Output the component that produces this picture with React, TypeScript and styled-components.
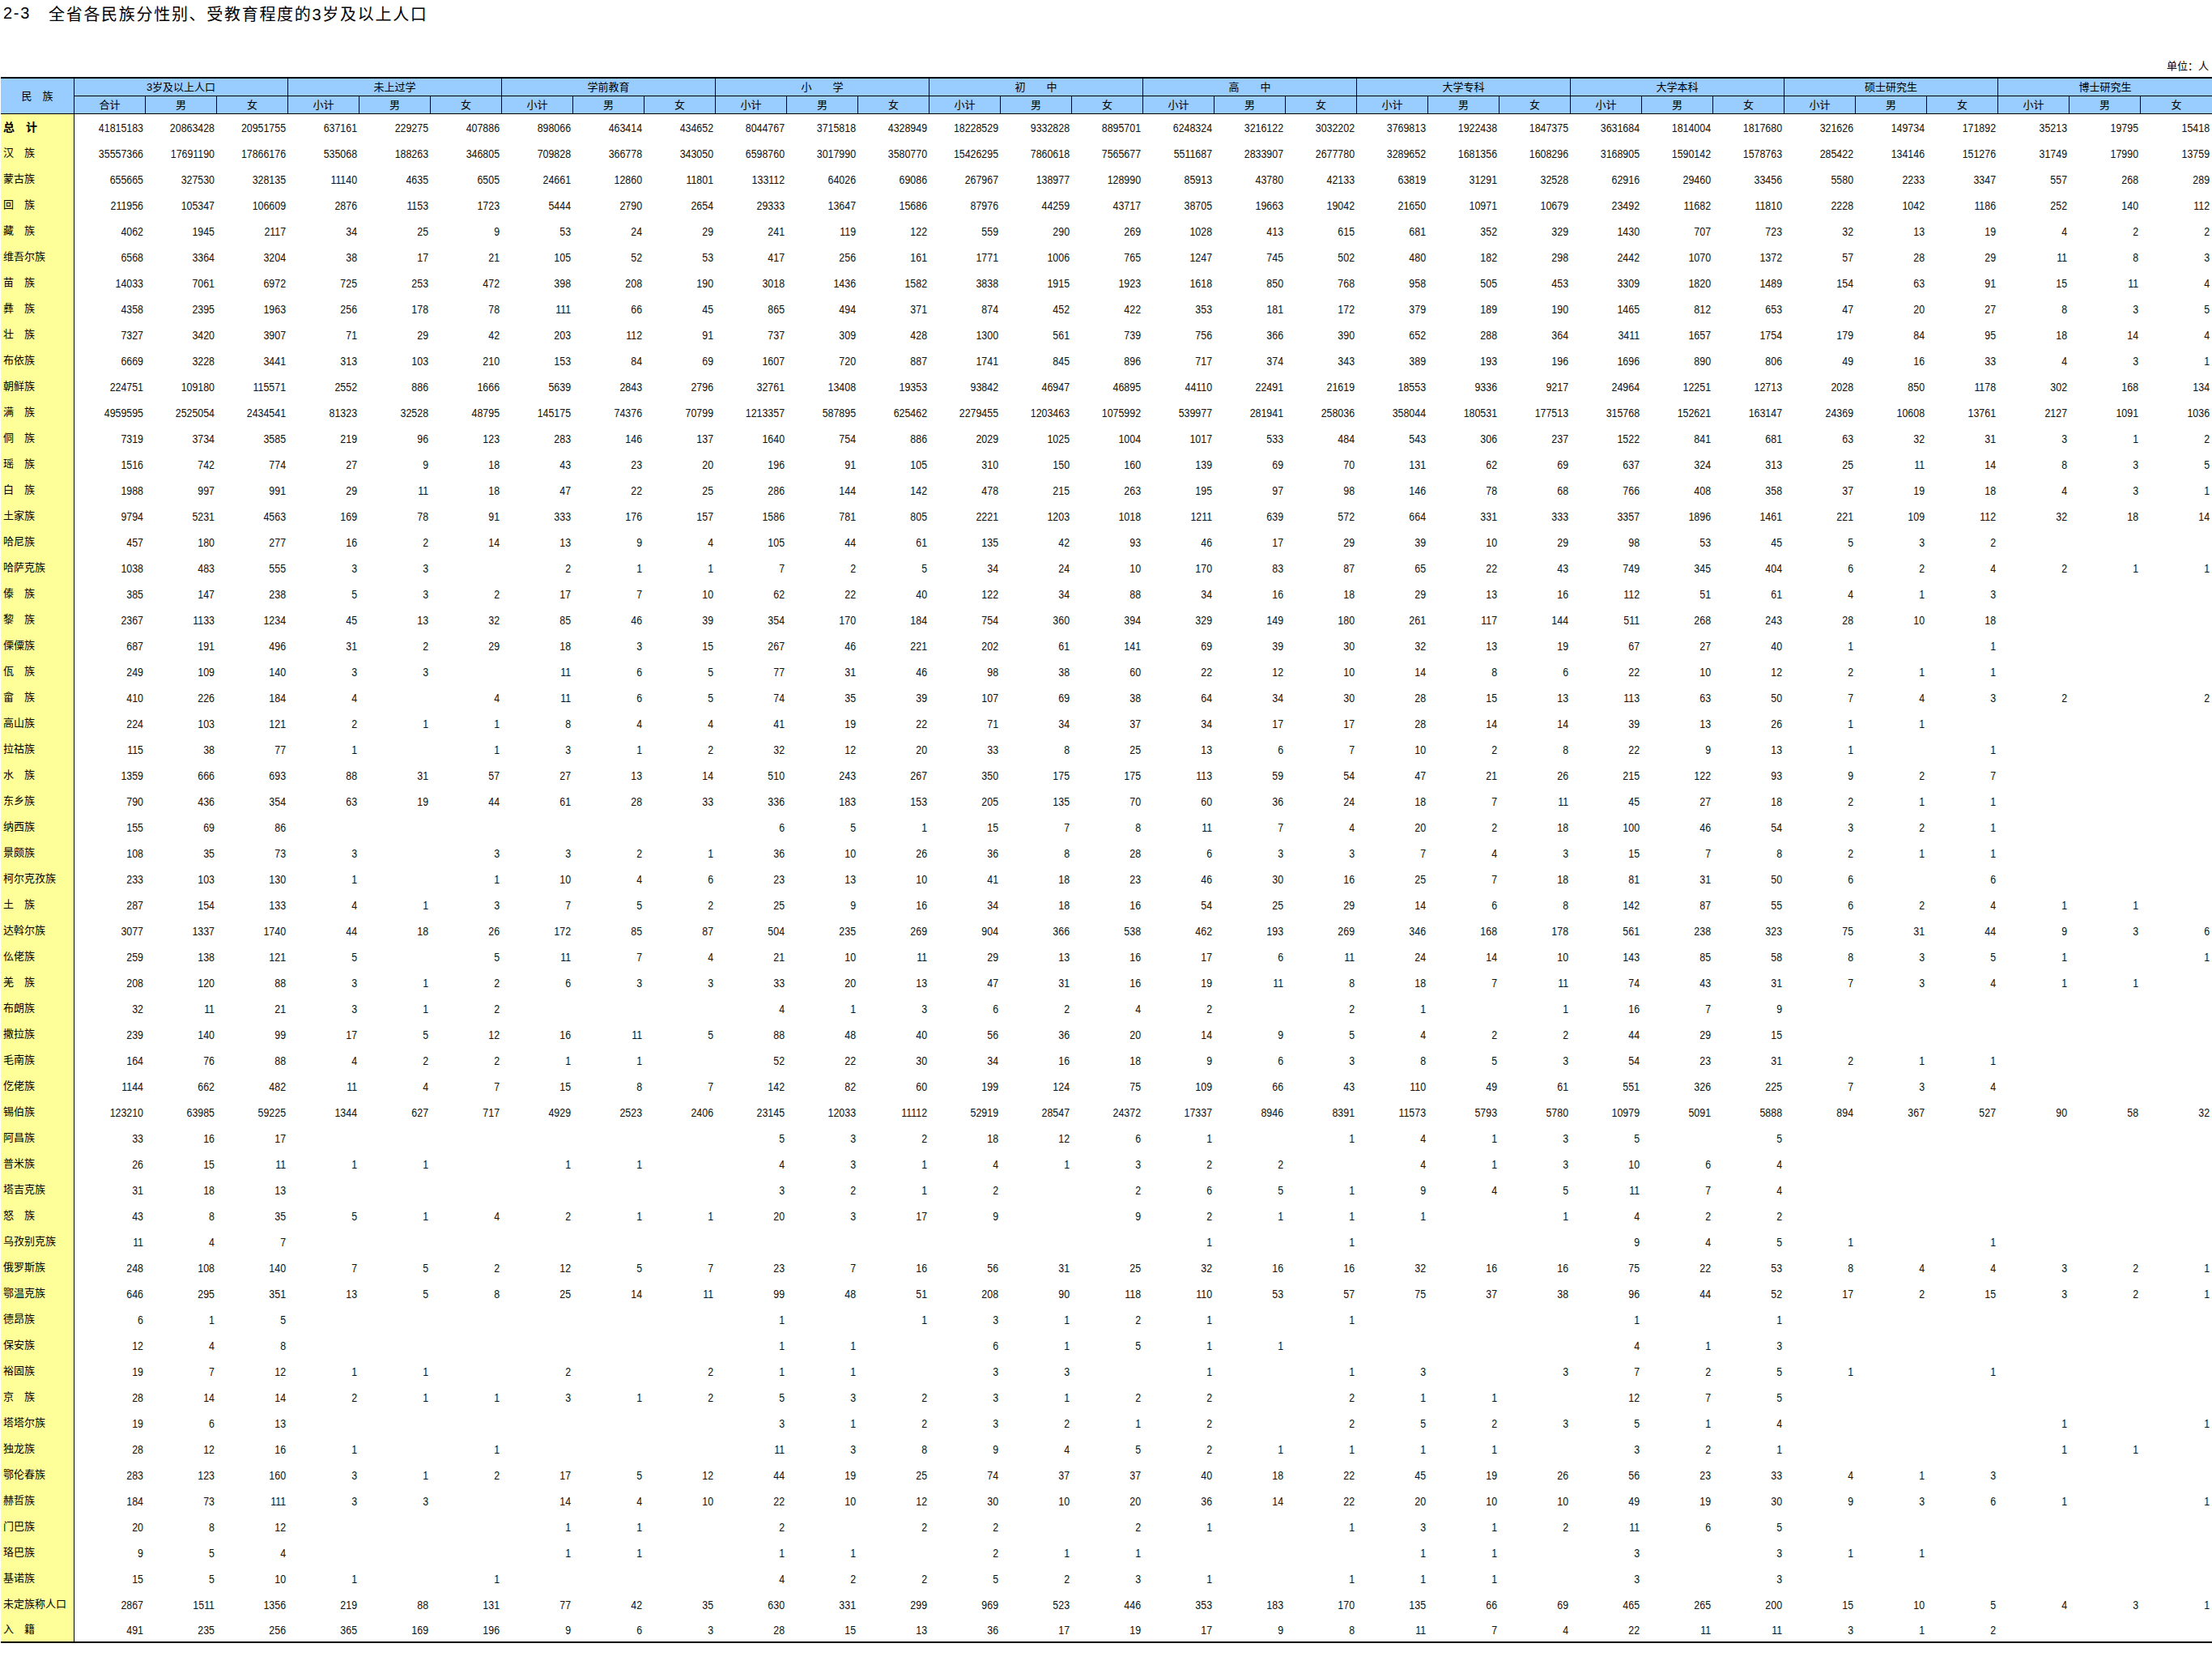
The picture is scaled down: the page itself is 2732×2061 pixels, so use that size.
import styled, { createGlobalStyle } from "styled-components";

const GROUPS = [
  "3岁及以上人口",
  "未上过学",
  "学前教育",
  "小　　学",
  "初　　中",
  "高　　中",
  "大学专科",
  "大学本科",
  "硕士研究生",
  "博士研究生",
];

// name, then the values left to right; _ is an empty cell, short lines end in empty cells
const DATA = `总　计 41815183 20863428 20951755 637161 229275 407886 898066 463414 434652 8044767 3715818 4328949 18228529 9332828 8895701 6248324 3216122 3032202 3769813 1922438 1847375 3631684 1814004 1817680 321626 149734 171892 35213 19795 15418
汉　族 35557366 17691190 17866176 535068 188263 346805 709828 366778 343050 6598760 3017990 3580770 15426295 7860618 7565677 5511687 2833907 2677780 3289652 1681356 1608296 3168905 1590142 1578763 285422 134146 151276 31749 17990 13759
蒙古族 655665 327530 328135 11140 4635 6505 24661 12860 11801 133112 64026 69086 267967 138977 128990 85913 43780 42133 63819 31291 32528 62916 29460 33456 5580 2233 3347 557 268 289
回　族 211956 105347 106609 2876 1153 1723 5444 2790 2654 29333 13647 15686 87976 44259 43717 38705 19663 19042 21650 10971 10679 23492 11682 11810 2228 1042 1186 252 140 112
藏　族 4062 1945 2117 34 25 9 53 24 29 241 119 122 559 290 269 1028 413 615 681 352 329 1430 707 723 32 13 19 4 2 2
维吾尔族 6568 3364 3204 38 17 21 105 52 53 417 256 161 1771 1006 765 1247 745 502 480 182 298 2442 1070 1372 57 28 29 11 8 3
苗　族 14033 7061 6972 725 253 472 398 208 190 3018 1436 1582 3838 1915 1923 1618 850 768 958 505 453 3309 1820 1489 154 63 91 15 11 4
彝　族 4358 2395 1963 256 178 78 111 66 45 865 494 371 874 452 422 353 181 172 379 189 190 1465 812 653 47 20 27 8 3 5
壮　族 7327 3420 3907 71 29 42 203 112 91 737 309 428 1300 561 739 756 366 390 652 288 364 3411 1657 1754 179 84 95 18 14 4
布依族 6669 3228 3441 313 103 210 153 84 69 1607 720 887 1741 845 896 717 374 343 389 193 196 1696 890 806 49 16 33 4 3 1
朝鲜族 224751 109180 115571 2552 886 1666 5639 2843 2796 32761 13408 19353 93842 46947 46895 44110 22491 21619 18553 9336 9217 24964 12251 12713 2028 850 1178 302 168 134
满　族 4959595 2525054 2434541 81323 32528 48795 145175 74376 70799 1213357 587895 625462 2279455 1203463 1075992 539977 281941 258036 358044 180531 177513 315768 152621 163147 24369 10608 13761 2127 1091 1036
侗　族 7319 3734 3585 219 96 123 283 146 137 1640 754 886 2029 1025 1004 1017 533 484 543 306 237 1522 841 681 63 32 31 3 1 2
瑶　族 1516 742 774 27 9 18 43 23 20 196 91 105 310 150 160 139 69 70 131 62 69 637 324 313 25 11 14 8 3 5
白　族 1988 997 991 29 11 18 47 22 25 286 144 142 478 215 263 195 97 98 146 78 68 766 408 358 37 19 18 4 3 1
土家族 9794 5231 4563 169 78 91 333 176 157 1586 781 805 2221 1203 1018 1211 639 572 664 331 333 3357 1896 1461 221 109 112 32 18 14
哈尼族 457 180 277 16 2 14 13 9 4 105 44 61 135 42 93 46 17 29 39 10 29 98 53 45 5 3 2
哈萨克族 1038 483 555 3 3 _ 2 1 1 7 2 5 34 24 10 170 83 87 65 22 43 749 345 404 6 2 4 2 1 1
傣　族 385 147 238 5 3 2 17 7 10 62 22 40 122 34 88 34 16 18 29 13 16 112 51 61 4 1 3
黎　族 2367 1133 1234 45 13 32 85 46 39 354 170 184 754 360 394 329 149 180 261 117 144 511 268 243 28 10 18
傈僳族 687 191 496 31 2 29 18 3 15 267 46 221 202 61 141 69 39 30 32 13 19 67 27 40 1 _ 1
佤　族 249 109 140 3 3 _ 11 6 5 77 31 46 98 38 60 22 12 10 14 8 6 22 10 12 2 1 1
畲　族 410 226 184 4 _ 4 11 6 5 74 35 39 107 69 38 64 34 30 28 15 13 113 63 50 7 4 3 2 _ 2
高山族 224 103 121 2 1 1 8 4 4 41 19 22 71 34 37 34 17 17 28 14 14 39 13 26 1 1
拉祜族 115 38 77 1 _ 1 3 1 2 32 12 20 33 8 25 13 6 7 10 2 8 22 9 13 1 _ 1
水　族 1359 666 693 88 31 57 27 13 14 510 243 267 350 175 175 113 59 54 47 21 26 215 122 93 9 2 7
东乡族 790 436 354 63 19 44 61 28 33 336 183 153 205 135 70 60 36 24 18 7 11 45 27 18 2 1 1
纳西族 155 69 86 _ _ _ _ _ _ 6 5 1 15 7 8 11 7 4 20 2 18 100 46 54 3 2 1
景颇族 108 35 73 3 _ 3 3 2 1 36 10 26 36 8 28 6 3 3 7 4 3 15 7 8 2 1 1
柯尔克孜族 233 103 130 1 _ 1 10 4 6 23 13 10 41 18 23 46 30 16 25 7 18 81 31 50 6 _ 6
土　族 287 154 133 4 1 3 7 5 2 25 9 16 34 18 16 54 25 29 14 6 8 142 87 55 6 2 4 1 1
达斡尔族 3077 1337 1740 44 18 26 172 85 87 504 235 269 904 366 538 462 193 269 346 168 178 561 238 323 75 31 44 9 3 6
仫佬族 259 138 121 5 _ 5 11 7 4 21 10 11 29 13 16 17 6 11 24 14 10 143 85 58 8 3 5 1 _ 1
羌　族 208 120 88 3 1 2 6 3 3 33 20 13 47 31 16 19 11 8 18 7 11 74 43 31 7 3 4 1 1
布朗族 32 11 21 3 1 2 _ _ _ 4 1 3 6 2 4 2 _ 2 1 _ 1 16 7 9
撒拉族 239 140 99 17 5 12 16 11 5 88 48 40 56 36 20 14 9 5 4 2 2 44 29 15
毛南族 164 76 88 4 2 2 1 1 _ 52 22 30 34 16 18 9 6 3 8 5 3 54 23 31 2 1 1
仡佬族 1144 662 482 11 4 7 15 8 7 142 82 60 199 124 75 109 66 43 110 49 61 551 326 225 7 3 4
锡伯族 123210 63985 59225 1344 627 717 4929 2523 2406 23145 12033 11112 52919 28547 24372 17337 8946 8391 11573 5793 5780 10979 5091 5888 894 367 527 90 58 32
阿昌族 33 16 17 _ _ _ _ _ _ 5 3 2 18 12 6 1 _ 1 4 1 3 5 _ 5
普米族 26 15 11 1 1 _ 1 1 _ 4 3 1 4 1 3 2 2 _ 4 1 3 10 6 4
塔吉克族 31 18 13 _ _ _ _ _ _ 3 2 1 2 _ 2 6 5 1 9 4 5 11 7 4
怒　族 43 8 35 5 1 4 2 1 1 20 3 17 9 _ 9 2 1 1 1 _ 1 4 2 2
乌孜别克族 11 4 7 _ _ _ _ _ _ _ _ _ _ _ _ 1 _ 1 _ _ _ 9 4 5 1 _ 1
俄罗斯族 248 108 140 7 5 2 12 5 7 23 7 16 56 31 25 32 16 16 32 16 16 75 22 53 8 4 4 3 2 1
鄂温克族 646 295 351 13 5 8 25 14 11 99 48 51 208 90 118 110 53 57 75 37 38 96 44 52 17 2 15 3 2 1
德昂族 6 1 5 _ _ _ _ _ _ 1 _ 1 3 1 2 1 _ 1 _ _ _ 1 _ 1
保安族 12 4 8 _ _ _ _ _ _ 1 1 _ 6 1 5 1 1 _ _ _ _ 4 1 3
裕固族 19 7 12 1 1 _ 2 _ 2 1 1 _ 3 3 _ 1 _ 1 3 _ 3 7 2 5 1 _ 1
京　族 28 14 14 2 1 1 3 1 2 5 3 2 3 1 2 2 _ 2 1 1 _ 12 7 5
塔塔尔族 19 6 13 _ _ _ _ _ _ 3 1 2 3 2 1 2 _ 2 5 2 3 5 1 4 _ _ _ 1 _ 1
独龙族 28 12 16 1 _ 1 _ _ _ 11 3 8 9 4 5 2 1 1 1 1 _ 3 2 1 _ _ _ 1 1
鄂伦春族 283 123 160 3 1 2 17 5 12 44 19 25 74 37 37 40 18 22 45 19 26 56 23 33 4 1 3
赫哲族 184 73 111 3 3 _ 14 4 10 22 10 12 30 10 20 36 14 22 20 10 10 49 19 30 9 3 6 1 _ 1
门巴族 20 8 12 _ _ _ 1 1 _ 2 _ 2 2 _ 2 1 _ 1 3 1 2 11 6 5
珞巴族 9 5 4 _ _ _ 1 1 _ 1 1 _ 2 1 1 _ _ _ 1 1 _ 3 _ 3 1 1
基诺族 15 5 10 1 _ 1 _ _ _ 4 2 2 5 2 3 1 _ 1 1 1 _ 3 _ 3
未定族称人口 2867 1511 1356 219 88 131 77 42 35 630 331 299 969 523 446 353 183 170 135 66 69 465 265 200 15 10 5 4 3 1
入　籍 491 235 256 365 169 196 9 6 3 28 15 13 36 17 19 17 9 8 11 7 4 22 11 11 3 1 2`;

const ROWS = DATA.split("\n").map((line) => {
  const [name, ...values] = line.split(" ");
  return {
    name,
    values: Array.from({ length: 30 }, (_, i) => (values[i] && values[i] !== "_" ? values[i] : "")),
  };
});

export default function App() {
  return (
    <Page>
      <GlobalStyle />
      <TitleBar>
        <span>2-3</span>
        <h1>全省各民族分性别、受教育程度的3岁及以上人口</h1>
      </TitleBar>
      <UnitBar>单位：人</UnitBar>
      <Table>
        <colgroup>
          <NameCol />
          {Array.from({ length: 30 }, (_, i) => (
            <ValueCol key={i} />
          ))}
        </colgroup>
        <thead>
          <tr>
            <NameHead rowSpan={2}>民　族</NameHead>
            {GROUPS.map((group) => (
              <GroupHead key={group} colSpan={3}>
                {group}
              </GroupHead>
            ))}
          </tr>
          <tr>
            {GROUPS.map((group, i) =>
              [i === 0 ? "合计" : "小计", "男", "女"].map((label) => (
                <SubHead key={group + label}>{label}</SubHead>
              ))
            )}
          </tr>
        </thead>
        <tbody>
          {ROWS.map((row, r) => (
            <tr key={row.name}>
              <NameCell $total={r === 0}>{row.name}</NameCell>
              {row.values.map((value, i) => (
                <ValueCell key={i}>
                  <Digits>{value}</Digits>
                </ValueCell>
              ))}
            </tr>
          ))}
        </tbody>
      </Table>
    </Page>
  );
}

const GlobalStyle = createGlobalStyle`
  body {
    margin: 0;
    background: #fff;
    color: #000;
    font-family: "Liberation Sans", "Noto Sans CJK SC", sans-serif;
  }
`;

const Page = styled.div`
  width: 2732px;
  padding-left: 1px;
  box-sizing: border-box;
`;

const TitleBar = styled.div`
  height: 32px;
  display: flex;
  align-items: center;
  gap: 22px;
  padding-left: 3px;
  font-size: 20px;
  letter-spacing: 1.7px;

  h1 {
    margin: 0;
    font-size: inherit;
    font-weight: 400;
  }
`;

const UnitBar = styled.div`
  height: 63px;
  box-sizing: border-box;
  display: flex;
  justify-content: flex-end;
  align-items: flex-end;
  padding: 0 4px 6px 0;
  font-size: 13px;
  line-height: 15px;
`;

const Table = styled.table`
  width: 2731px;
  table-layout: fixed;
  border-collapse: separate;
  border-spacing: 0;
  border-top: 2px solid #000;
  border-bottom: 2px solid #000;

  tbody tr:last-child td {
    height: 30px;
  }
`;

const NameCol = styled.col`
  width: 91px;
`;

const ValueCol = styled.col`
  width: 88px;
`;

const HeadCell = styled.th`
  box-sizing: border-box;
  height: 22px;
  padding: 0;
  background: #99ccff;
  border-bottom: 1px solid #000;
  border-right: 1px solid #000;
  font-size: 13px;
  font-weight: 400;
  line-height: 16px;
  text-align: center;
  white-space: nowrap;

  &:last-child {
    border-right: 0;
  }
`;

const NameHead = styled(HeadCell)``;

const GroupHead = styled(HeadCell)``;

const SubHead = styled(HeadCell)``;

const NameCell = styled.td<{ $total: boolean }>`
  box-sizing: border-box;
  height: 32px;
  padding: 0 0 0 3px;
  background: #ffff99;
  border-right: 1px solid #000;
  font-size: ${(p) => (p.$total ? "14px" : "13px")};
  font-weight: ${(p) => (p.$total ? 700 : 400)};
  line-height: 16px;
  white-space: nowrap;
  overflow: hidden;
`;

const ValueCell = styled.td`
  box-sizing: border-box;
  height: 32px;
  padding: 0 3px 0 0;
  text-align: right;
  white-space: nowrap;
`;

const Digits = styled.span`
  display: inline-block;
  font-size: 12.4px;
  line-height: 14px;
  color: #111;
  transform: scaleY(1.16);
`;
